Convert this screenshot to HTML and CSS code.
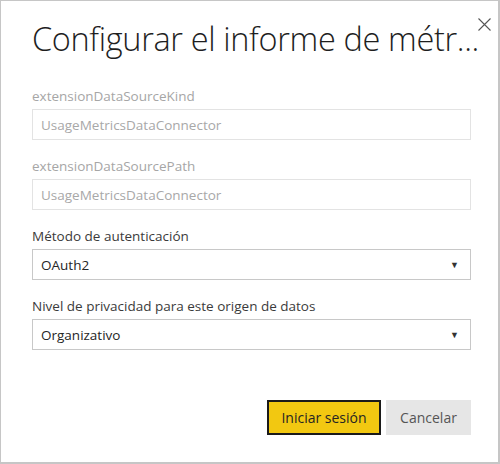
FILE: index.html
```html
<!DOCTYPE html>
<html>
<head>
<meta charset="utf-8">
<link rel="stylesheet" href="styles.css">
</head>
<body>
<div class="dialog">
  <button class="close" aria-label="Cerrar">
    <svg width="13" height="13" viewBox="0 0 13 13"><path d="M0.5 0.5L12.5 12.5M12.5 0.5L0.5 12.5" stroke="#555" stroke-width="1.1" fill="none"/></svg>
  </button>
  <h1 class="title">Configurar el informe de métr...</h1>
  <div class="fields">
    <div class="field">
      <label class="label disabled">extensionDataSourceKind</label>
      <div class="input disabled">UsageMetricsDataConnector</div>
    </div>
    <div class="field">
      <label class="label disabled">extensionDataSourcePath</label>
      <div class="input disabled">UsageMetricsDataConnector</div>
    </div>
    <div class="field">
      <label class="label">Método de autenticación</label>
      <div class="input select"><span>OAuth2</span><span class="arrow">▼</span></div>
    </div>
    <div class="field">
      <label class="label">Nivel de privacidad para este origen de datos</label>
      <div class="input select"><span>Organizativo</span><span class="arrow">▼</span></div>
    </div>
  </div>
  <div class="actions">
    <button class="btn primary">Iniciar sesión</button>
    <button class="btn secondary">Cancelar</button>
  </div>
</div>
</body>
</html>
```
FILE: styles.css
```css
* { box-sizing: border-box; }
html, body { margin: 0; padding: 0; background: #fff; }
body { width: 500px; height: 464px; font-family: "Open Sans", "Noto Sans", sans-serif; }
.dialog {
  position: relative;
  width: 500px;
  height: 464px;
  border-style: solid;
  border-color: #c6c6c6;
  border-width: 1px 2px 2px 1px;
  padding: 0 27px 0 31px;
  display: flex;
  flex-direction: column;
}
.close {
  position: absolute;
  top: 16px;
  right: 6px;
  width: 15px;
  height: 15px;
  padding: 1px;
  border: 0;
  background: none;
  display: flex;
}
.title {
  margin: 17px 0 0 0;
  font-weight: 300;
  font-size: 32.5px;
  line-height: 42px;
  color: #1e1e1e;
  white-space: nowrap;
  letter-spacing: -0.35px;
}
.fields {
  margin-top: 27px;
  display: flex;
  flex-direction: column;
  gap: 17px;
}
.field { display: flex; flex-direction: column; gap: 4px; }
.label { font-size: 13.5px; line-height: 18px; color: #3b3b3b; }
.label.disabled { color: #a6a6a6; }
.input {
  height: 31px;
  border: 1px solid #c8c8c8;
  padding: 0 11px 0 8px;
  font-size: 13.5px;
  color: #252525;
  display: flex;
  align-items: center;
  justify-content: space-between;
}
.input.disabled { border-color: #e3e3e3; color: #a8a8a8; }
.arrow { font-size: 9px; color: #333; }
.actions {
  margin-top: 50px;
  display: flex;
  justify-content: flex-end;
  gap: 5px;
}
.btn {
  height: 35px;
  font-family: inherit;
  font-size: 14px;
  padding: 0;
}
.primary {
  width: 114px;
  background: #f2c811;
  border: 2px solid #1a1a1a;
  color: #252423;
}
.secondary {
  width: 85px;
  background: #e6e6e6;
  border: 0;
  color: #555;
}
```
